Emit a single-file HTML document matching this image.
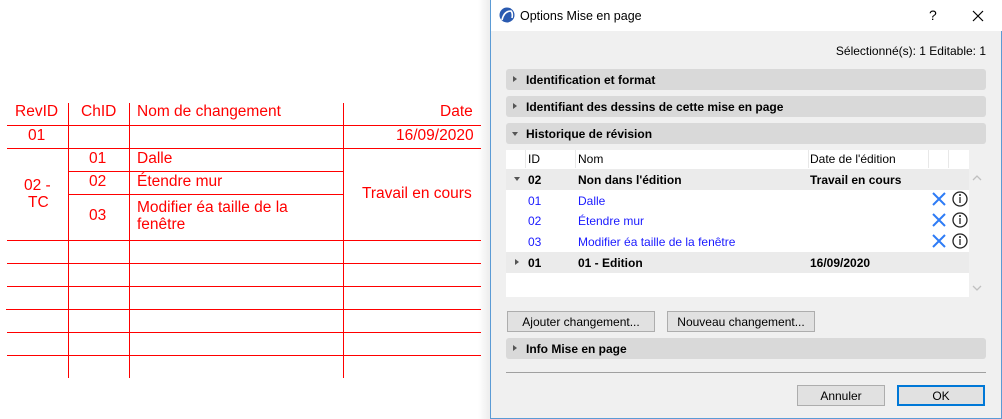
<!DOCTYPE html>
<html><head><meta charset="utf-8"><style>
*{margin:0;padding:0;box-sizing:border-box}
body{width:1002px;height:419px;position:relative;overflow:hidden;background:#fff;font-family:"Liberation Sans",sans-serif}
.a{position:absolute}
.h{position:absolute;height:1px;background:#f00}
.v{position:absolute;width:1px;background:#f00}
.r{position:absolute;color:#f00;font-size:15.5px;line-height:18px}
.d{font-size:12px;color:#000}
.bar{position:absolute;left:506px;width:480px;height:21px;background:#d9d9d9;border-radius:3px;font-weight:bold;font-size:12px;line-height:22px;padding-left:20px}
.tri{position:absolute;left:7px;top:7px;width:0;height:0;border-left:4px solid #555;border-top:3.5px solid transparent;border-bottom:3.5px solid transparent}
.trd{position:absolute;left:6px;top:9px;width:0;height:0;border-top:4px solid #555;border-left:3.5px solid transparent;border-right:3.5px solid transparent}
.btn{position:absolute;height:21px;background:#e1e1e1;border:1px solid #adadad;font-size:12px;text-align:center;line-height:20px}
.row{position:absolute;left:506px;width:463px;height:21px;font-size:12px;line-height:22px}
.row span{position:absolute}
</style></head><body>
<div class="h" style="left:7px;width:474px;top:125px"></div>
<div class="h" style="left:7px;width:474px;top:148px"></div>
<div class="h" style="left:68px;width:275px;top:171px"></div>
<div class="h" style="left:68px;width:275px;top:194px"></div>
<div class="h" style="left:7px;width:474px;top:240px"></div>
<div class="h" style="left:7px;width:474px;top:263px"></div>
<div class="h" style="left:7px;width:474px;top:286px"></div>
<div class="h" style="left:6px;width:475px;top:309px"></div>
<div class="h" style="left:7px;width:474px;top:332px"></div>
<div class="h" style="left:7px;width:474px;top:355px"></div>
<div class="v" style="left:68px;top:103px;height:275px"></div>
<div class="v" style="left:129px;top:103px;height:275px"></div>
<div class="v" style="left:343px;top:103px;height:275px"></div>
<div class="r" style="left:15px;top:103px">RevID</div>
<div class="r" style="left:81px;top:103px">ChID</div>
<div class="r" style="left:137px;top:103px">Nom de changement</div>
<div class="r" style="left:440px;top:103px">Date</div>
<div class="r" style="left:28px;top:127px">01</div>
<div class="r" style="left:396px;top:127px">16/09/2020</div>
<div class="r" style="left:89px;top:150px">01</div>
<div class="r" style="left:137px;top:150px">Dalle</div>
<div class="r" style="left:89px;top:173px">02</div>
<div class="r" style="left:137px;top:173px">Étendre mur</div>
<div class="r" style="left:89px;top:207px">03</div>
<div class="r" style="left:137px;top:199px">Modifier éa taille de la</div>
<div class="r" style="left:137px;top:216px">fenêtre</div>
<div class="r" style="left:24px;top:177px">02 -</div>
<div class="r" style="left:28px;top:194px">TC</div>
<div class="r" style="left:362px;top:185px">Travail en cours</div>
<div class="a" style="left:478px;top:0;width:13px;height:419px;background:linear-gradient(to right,rgba(0,0,0,0),rgba(0,0,0,0.08))"></div>
<div class="a" style="left:490px;top:0;width:512px;height:419px;background:#f0f0f0;border:1px solid #5b9bd5;border-top:none"></div>
<div class="a" style="left:491px;top:0;width:511px;height:31px;background:#fff"></div>
<svg class="a" style="left:499px;top:7px" width="16" height="16" viewBox="0 0 16 16"><circle cx="8" cy="8" r="7.5" fill="#2a5ab0"/><path d="M3 13 Q5 4 12 4 Q14 6 13 11" fill="none" stroke="#fff" stroke-width="1.6"/></svg>
<div class="a d" style="left:520px;top:9px;font-size:12.5px">Options Mise en page</div>
<div class="a d" style="left:929px;top:7px;font-size:14px">?</div>
<svg class="a" style="left:972px;top:10px" width="12" height="12"><path d="M1 1L11 11M11 1L1 11" stroke="#000" stroke-width="1.2"/></svg>
<div class="a d" style="right:16px;top:44px">Sélectionné(s): 1 Editable: 1</div>
<div class="bar" style="top:69px"><div class="tri"></div>Identification et format</div>
<div class="bar" style="top:96px"><div class="tri"></div>Identifiant des dessins de cette mise en page</div>
<div class="bar" style="top:123px"><div class="trd"></div>Historique de révision</div>
<div class="a" style="left:506px;top:150px;width:463px;height:147px;background:#fff"></div>
<div class="row" style="top:148px;height:20px"><span style="left:22px">ID</span><span style="left:72px">Nom</span><span style="left:304px">Date de l'édition</span></div>
<div class="a" style="left:525px;top:150px;width:1px;height:18px;background:#e8e8e8"></div>
<div class="a" style="left:575px;top:150px;width:1px;height:18px;background:#e8e8e8"></div>
<div class="a" style="left:808px;top:150px;width:1px;height:18px;background:#e8e8e8"></div>
<div class="a" style="left:928px;top:150px;width:1px;height:18px;background:#e8e8e8"></div>
<div class="a" style="left:948px;top:150px;width:1px;height:18px;background:#e8e8e8"></div>
<div class="row" style="top:169px;background:#ebebeb;font-weight:bold"><div class="trd" style="left:8px;top:8px"></div><span style="left:22px">02</span><span style="left:72px">Non dans l'édition</span><span style="left:304px">Travail en cours</span></div>
<div class="row" style="top:190px;color:#1a1aff"><span style="left:22px">01</span><span style="left:72px">Dalle</span></div>
<div class="row" style="top:210px;color:#1a1aff"><span style="left:22px">02</span><span style="left:72px">Étendre mur</span></div>
<div class="row" style="top:231px;color:#1a1aff"><span style="left:22px">03</span><span style="left:72px">Modifier éa taille de la fenêtre</span></div>
<div class="row" style="top:252px;background:#ebebeb;font-weight:bold"><div class="tri" style="left:9px"></div><span style="left:22px">01</span><span style="left:72px">01 - Edition</span><span style="left:304px">16/09/2020</span></div>
<svg class="a" style="left:930px;top:189px" width="40" height="64">
<g stroke="#2e7cf6" stroke-width="2" fill="none"><path d="M3 4L15 16M15 4L3 16"/><path d="M3 25L15 37M15 25L3 37"/><path d="M3 46L15 58M15 46L3 58"/></g>
<g stroke="#222" stroke-width="1.3" fill="none"><circle cx="30" cy="10" r="7"/><circle cx="30" cy="31" r="7"/><circle cx="30" cy="52" r="7"/><path d="M30 8v6M30 29v6M30 50v6"/></g>
<g fill="#222"><circle cx="30" cy="6" r="1"/><circle cx="30" cy="27" r="1"/><circle cx="30" cy="48" r="1"/></g></svg>
<svg class="a" style="left:972px;top:173px" width="10" height="120"><path d="M1 7L5 3L9 7" stroke="#c0c0c0" fill="none" stroke-width="1.3"/><path d="M1 113L5 117L9 113" stroke="#c0c0c0" fill="none" stroke-width="1.3"/></svg>
<div class="btn" style="left:507px;top:311px;width:148px">Ajouter changement...</div>
<div class="btn" style="left:667px;top:311px;width:148px">Nouveau changement...</div>
<div class="bar" style="top:338px"><div class="tri"></div>Info Mise en page</div>
<div class="a" style="left:506px;top:372px;width:480px;height:1px;background:#a0a0a0"></div>
<div class="btn" style="left:797px;top:385px;width:88px">Annuler</div>
<div class="btn" style="left:897px;top:385px;width:88px;border:2px solid #0078d7;line-height:18px">OK</div>
</body></html>
